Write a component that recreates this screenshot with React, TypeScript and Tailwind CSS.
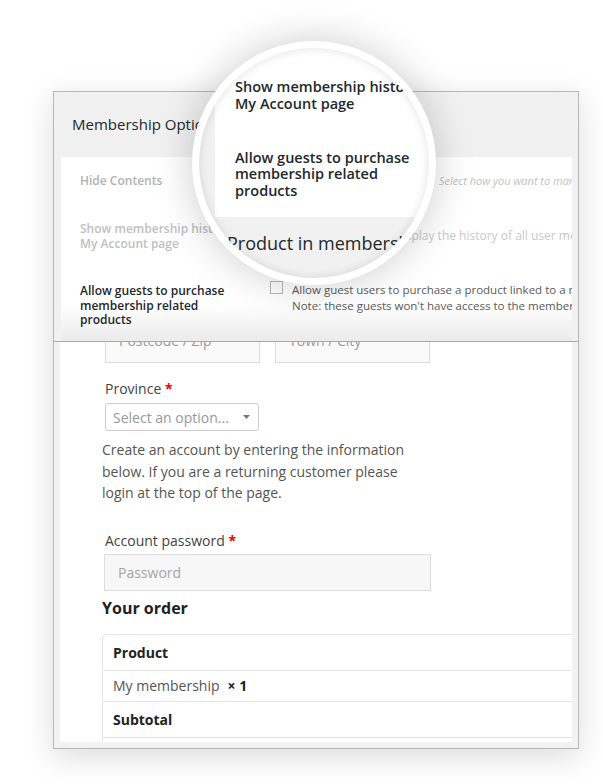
import React from "react";

const F = { fontFamily: '"Open Sans", "Liberation Sans", sans-serif' };

function Field({ text, w }: { text: string; w: string }) {
  return (
    <div className={`${w} h-[46px] border border-[#dcdcdc] bg-[#fafafa] flex items-center pl-[13px] text-[14px] text-[#9a9a9a]`}>
      {text}
    </div>
  );
}

export default function App() {
  return (
    <div className="relative w-[603px] h-[784px] overflow-hidden bg-white" style={F}>
      <div className="pt-[91px] pl-[53px]">
        {/* Card */}
        <div className="w-[526px] h-[658px] border border-[#b8b8b8] bg-[#f2f2f2] shadow-[0_8px_30px_rgba(0,0,0,0.14)] flex flex-col overflow-hidden">
          {/* Top panel: Membership Options */}
          <div className="h-[249px] flex flex-col bg-[#f1f1f1]">
            <div className="h-[65px] flex items-center pl-[18px] text-[15px] text-[#23282d]">
              Membership Options
            </div>
            <div className="ml-[7px] mr-[6px] flex-1 bg-linear-to-b from-white from-80% to-[#ebebeb] overflow-hidden">
              {/* Row 1 */}
              <div className="flex items-center h-[48px] pl-[19px]">
                <div className="w-[359px] shrink-0 text-[12px] font-semibold text-[#b2b2b2] whitespace-nowrap">Hide Contents</div>
                <div className="text-[11px] italic text-[#c2c2c2] whitespace-nowrap">Select how you want to manage</div>
              </div>
              {/* Row 2 */}
              <div className="flex items-center h-[62px] pl-[19px]">
                <div className="w-[314px] shrink-0 text-[12px] leading-[15px] font-semibold text-[#c0c0c0]">
                  <div className="whitespace-nowrap">Show membership history in</div>
                  <div className="whitespace-nowrap">My Account page</div>
                </div>
                <div className="text-[12px] text-[#c8c8c8] whitespace-nowrap">Display the history of all user memberships</div>
              </div>
              {/* Row 3 */}
              <div className="flex pl-[19px] pt-[17px]">
                <div className="w-[190px] shrink-0 text-[12px] leading-[14.5px] font-semibold text-[#23282d]">
                  <div className="whitespace-nowrap">Allow guests to purchase</div>
                  <div className="whitespace-nowrap">membership related</div>
                  <div className="whitespace-nowrap">products</div>
                </div>
                <div className="flex gap-[9px]">
                  <div className="-mt-[3px] w-[13px] h-[13px] border border-[#b4b9be] bg-white shrink-0" />
                  <div className="-mt-[2px] text-[11.5px] leading-[16px] text-[#5a5a5a] whitespace-nowrap">
                    <div>Allow guest users to purchase a product linked to a membership</div>
                    <div>Note: these guests won't have access to the membership content</div>
                  </div>
                </div>
              </div>
            </div>
          </div>
          <div className="h-px bg-[#a9a9a9]" />
          {/* Bottom: checkout */}
          <div className="flex-1 flex flex-col">
            <div className="ml-[6px] mr-[6px] h-[400px] bg-white overflow-hidden pl-[42px] text-[#555]">
              <div className="flex gap-[15px] ml-[3px] -mt-[25px]">
                <Field text="Postcode / Zip" w="w-[155px]" />
                <Field text="Town / City" w="w-[155px]" />
              </div>
              <div className="ml-[3px] mt-[16px] text-[14px] leading-[20px] text-[#444]">
                Province <span className="text-[#e00] font-bold">*</span>
              </div>
              <div className="ml-[3px] mt-[4px] w-[154px] h-[28px] border border-[#cfcfcf] rounded-[3px] flex items-center justify-between pl-[7px] pr-[8px] text-[14px] text-[#999]">
                <span>Select an option...</span>
                <svg width="7" height="4" viewBox="0 0 7 4"><path d="M0 0h7L3.5 4z" fill="#777" /></svg>
              </div>
              <div className="mt-[8px] w-[312px] text-[14px] leading-[21.5px] text-[#555]">
                Create an account by entering the information below. If you are a returning customer please login at the top of the page.
              </div>
              <div className="ml-[3px] mt-[27px] text-[14px] leading-[20px] text-[#444]">
                Account password <span className="text-[#e00] font-bold">*</span>
              </div>
              <div className="ml-[2px] mt-[3px] w-[327px] h-[37px] border border-[#dcdcdc] bg-[#f7f7f7] flex items-center pl-[13px] text-[14px] text-[#a5a5a5]">
                Password
              </div>
              <div className="mt-[6px] text-[16px] leading-[22px] font-bold text-[#222]">Your order</div>
              <div className="mt-[15px] w-[520px] border border-[#e4e4e4] rounded-tl-[5px] text-[14px]">
                <div className="h-[36px] flex items-center pl-[10px] font-bold text-[#222] border-b border-[#e4e4e4]">Product</div>
                <div className="h-[31px] flex items-center pl-[10px] text-[#555] border-b border-[#e4e4e4]">
                  My membership <span className="ml-[8px] font-bold text-[#222]">× 1</span>
                </div>
                <div className="h-[36px] flex items-center pl-[10px] font-bold text-[#222] border-b border-[#e4e4e4]">Subtotal</div>
                <div className="h-[36px]" />
              </div>
            </div>
          </div>
        </div>
      </div>

      {/* Magnifier */}
      <div className="absolute left-[192px] top-[41px] w-[244px] h-[244px] rounded-full border-[7px] border-white bg-[#f1f1f1] shadow-[0_0_40px_rgba(0,0,0,0.2)] overflow-hidden">
        <div className="flex flex-col">
          <div className="ml-[16px] h-[169px] bg-white pt-[31px] pl-[20px] text-[14.5px] leading-[16.5px] font-semibold text-[#23282d]">
            <div className="whitespace-nowrap">Show membership history in</div>
            <div className="whitespace-nowrap">My Account page</div>
            <div className="mt-[37.5px] whitespace-nowrap">Allow guests to purchase</div>
            <div className="whitespace-nowrap">membership related</div>
            <div className="whitespace-nowrap">products</div>
          </div>
          <div className="pl-[28px] pt-[14px] text-[18px] leading-[24px] text-[#23282d] whitespace-nowrap">
            Product in membership
          </div>
        </div>
        <div className="absolute inset-0 rounded-full shadow-[inset_0_0_10px_rgba(0,0,0,0.12)]" />
      </div>
    </div>
  );
}
